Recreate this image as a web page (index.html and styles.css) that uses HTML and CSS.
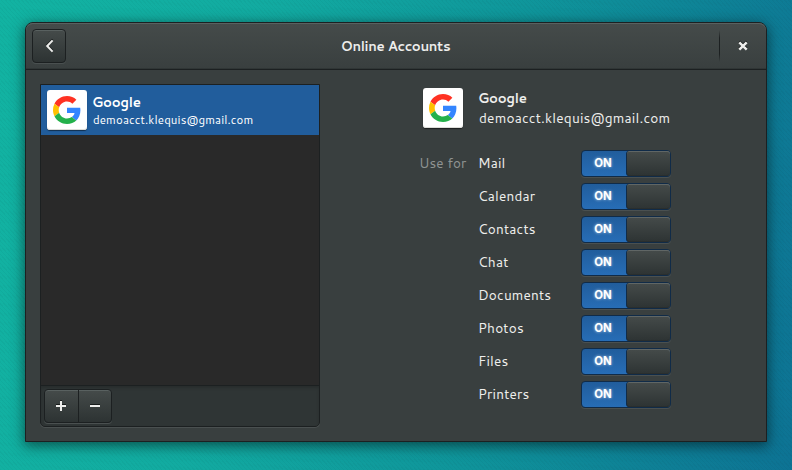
FILE: index.html
```html
<!DOCTYPE html>
<html lang="en">
<head>
<meta charset="utf-8">
<title>Online Accounts</title>
<link rel="stylesheet" href="styles.css">
</head>
<body>
<svg class="defs" width="0" height="0" aria-hidden="true">
  <symbol id="google" viewBox="0 0 48 48">
    <path fill="#ff3223" d="M24 9.5c3.54 0 6.71 1.22 9.21 3.6l6.85-6.85C35.9 2.38 30.47 0 24 0 14.62 0 6.51 5.38 2.56 13.22l7.98 6.19C12.43 13.72 17.74 9.5 24 9.5z"/>
    <path fill="#3385ff" d="M46.98 24.55c0-1.57-.15-3.09-.38-4.55H24v9.02h12.94c-.58 2.96-2.26 5.48-4.78 7.18l7.73 6c4.51-4.18 7.09-10.36 7.09-17.65z"/>
    <path fill="#ffc100" d="M10.53 28.59A14.5 14.5 0 0 1 9.77 24c0-1.6.27-3.14.76-4.59l-7.98-6.19A23.94 23.94 0 0 0 0 24c0 3.88.92 7.54 2.56 10.78z"/>
    <path fill="#24b14b" d="M24 48c6.48 0 11.93-2.13 15.89-5.81l-7.73-6c-2.15 1.45-4.92 2.3-8.16 2.3-6.26 0-11.57-4.22-13.47-9.91l-7.98 6.19C6.51 42.62 14.62 48 24 48z"/>
  </symbol>
</svg>
<main class="window">
  <header class="header">
    <button class="button back" aria-label="Back"><svg width="16" height="16" viewBox="0 0 16 16"><path d="M11.6 2.4 6.2 8l5.4 5.6"/></svg></button>
    <h1 class="title"><span>Online Accounts</span></h1>
    <div class="end"><button class="close" aria-label="Close"><svg width="10" height="10" viewBox="0 0 10 10"><path d="m1.3 1.3 7.4 7.4M8.7 1.3 1.3 8.7"/></svg></button></div>
  </header>
  <div class="content">
    <section class="sidebar">
      <div class="list">
        <div class="account">
          <div class="logo"><svg width="28" height="28"><use href="#google"/></svg></div>
          <div><div class="name">Google</div><div class="small">demoacct.klequis@gmail.com</div></div>
        </div>
      </div>
      <div class="toolbar">
        <button class="button add" aria-label="Add"><svg width="12" height="12" viewBox="0 0 12 12"><path d="M6 1v10M1 6h10"/></svg></button>
        <button class="button remove" aria-label="Remove"><svg width="12" height="12" viewBox="0 0 12 12"><path d="M1 6h10"/></svg></button>
      </div>
    </section>
    <section class="details">
      <div class="summary">
        <div class="logo"><svg width="28" height="28"><use href="#google"/></svg></div>
        <div><div class="name">Google</div><div class="email">demoacct.klequis@gmail.com</div></div>
      </div>
      <div class="services">
        <div class="row"><span class="use">Use for</span><span class="label">Mail</span><div class="switch"><b>ON</b><i></i></div></div>
        <div class="row"><span></span><span class="label">Calendar</span><div class="switch"><b>ON</b><i></i></div></div>
        <div class="row"><span></span><span class="label">Contacts</span><div class="switch"><b>ON</b><i></i></div></div>
        <div class="row"><span></span><span class="label">Chat</span><div class="switch"><b>ON</b><i></i></div></div>
        <div class="row"><span></span><span class="label">Documents</span><div class="switch"><b>ON</b><i></i></div></div>
        <div class="row"><span></span><span class="label">Photos</span><div class="switch"><b>ON</b><i></i></div></div>
        <div class="row"><span></span><span class="label">Files</span><div class="switch"><b>ON</b><i></i></div></div>
        <div class="row"><span></span><span class="label">Printers</span><div class="switch"><b>ON</b><i></i></div></div>
      </div>
    </section>
  </div>
</main>
</body>
</html>
```

FILE: styles.css
```css
* { box-sizing: border-box; }
body {
  margin: 0;
  width: 792px;
  height: 470px;
  padding: 22px 25px 28px;
  overflow: hidden;
  color: #eeeeec;
  font-family: Cantarell, "Noto Sans", sans-serif;
  font-size: 13.5px;
  line-height: 20px;
  background:
    repeating-linear-gradient(48deg, rgba(0,0,0,.03) 0 1px, transparent 1px 3px),
    linear-gradient(100deg, #12b3a2 0%, #12aba1 30%, #0f969b 60%, #0e8096 84%, #0d7394 100%);
}
.defs { display: block; height: 0; }
svg { display: block; }
.window {
  width: 742px;
  height: 420px;
  border: 1px solid #1c2021;
  border-radius: 8px 8px 0 0;
  background: #393f3f;
  box-shadow: 0 3px 13px 1px rgba(0,0,0,.5);
}
.header {
  display: grid;
  grid-template-columns: 48px 1fr 47px;
  align-items: center;
  height: 47px;
  padding: 0 0 0 6px;
  border-bottom: 1px solid #1c2021;
  border-radius: 7px 7px 0 0;
  background: linear-gradient(#454b4a, #393f3f);
  box-shadow: inset 0 1px #596160, inset 0 -1px #303636;
}
.title {
  margin: 0;
  padding-right: 8px;
  text-align: center;
  font-size: 13.3px;
  line-height: 20px;
  font-weight: 700;
  letter-spacing: -.33px;
}
.button {
  display: grid;
  place-items: center;
  width: 34px;
  height: 34px;
  padding: 0;
  border: 1px solid #1c2021;
  border-radius: 4px;
  color: #eeeeec;
  background: linear-gradient(#454b4a, #2d3333);
  box-shadow: inset 0 1px #596160, 0 1px #4a5050;
}
.button path, .close path { fill: none; stroke: currentColor; stroke-width: 2; }
.button svg, .close svg { filter: drop-shadow(0 -1px #171b1b); }
.end {
  display: flex;
  align-items: center;
  justify-content: center;
  height: 32px;
  background: linear-gradient(transparent, #1c2021 25% 75%, transparent) 0 0 / 1px 100% no-repeat;
}
.close { padding: 0; border: 0; color: #eeeeec; background: none; }
.close path { stroke-width: 2.4; }
.content { display: flex; height: 371px; padding: 14px; }
.sidebar {
  display: flex;
  flex-direction: column;
  width: 280px;
  height: 343px;
  border: 1px solid #1c2021;
  border-radius: 0 0 5px 5px;
  background: #292929;
  box-shadow: 0 1px #4a5050;
}
.list { flex: 1; }
.account {
  display: flex;
  gap: 6px;
  height: 50px;
  padding: 5px 6px;
  background: #215d9c;
  color: #fff;
}
.logo {
  display: grid;
  place-items: center;
  flex: none;
  width: 40px;
  height: 40px;
  border-radius: 3px;
  background: #fff;
  box-shadow: 0 1px 1px rgba(0,0,0,.5), inset 0 -1px #ddddd9;
}
.name {
  margin-left: -1px;
  font-size: 13.3px;
  line-height: 20px;
  font-weight: 700;
  letter-spacing: -.3px;
}
.account .name { padding-top: 2px; }
.small { font-size: 11.5px; line-height: 16px; letter-spacing: .13px; white-space: nowrap; }
.toolbar {
  display: flex;
  height: 41px;
  padding: 3px;
  border-top: 1px solid #1c2021;
  border-radius: 0 0 4px 4px;
  background: #2f3535;
  box-shadow: inset 0 2px 3px rgba(0,0,0,.16);
}
.add { width: 35px; padding-right: 1px; border-radius: 4px 0 0 4px; }
.remove { width: 34px; margin-left: -1px; border-radius: 0 4px 4px 0; }
.details { width: 280px; margin-left: 94px; padding-top: 4px; }
.summary { display: flex; gap: 16px; padding-left: 9px; }
.email { font-size: 13.7px; letter-spacing: .17px; white-space: nowrap; }
.services { display: grid; gap: 6px; margin-top: 22px; }
.row {
  display: grid;
  grid-template-columns: 65px 102px 90px;
  align-items: center;
  height: 27px;
}
.use { padding: 0 0 2px 5px; color: #8f9392; letter-spacing: .1px; }
.label { margin-left: -1px; padding-bottom: 2px; font-size: 13.6px; letter-spacing: .18px; }
.switch {
  display: grid;
  grid-template-columns: 44px 1fr;
  width: 90px;
  height: 27px;
  border: 1px solid #102b48;
  border-radius: 4px;
  background: linear-gradient(#215d9c, #276db6);
  box-shadow: 0 1px #4a5050;
}
.switch b {
  padding-right: 2px;
  color: #fff;
  text-align: center;
  font: 700 11.4px/24px Inter, sans-serif;
  text-shadow: 0 0 3px rgba(255,255,255,.7);
}
.switch i {
  border-left: 1px solid #102b48;
  border-radius: 3px;
  background: linear-gradient(#454b4a, #2d3333);
  box-shadow: inset 0 1px #606665, inset 0 -1px #292e2e;
}
```
